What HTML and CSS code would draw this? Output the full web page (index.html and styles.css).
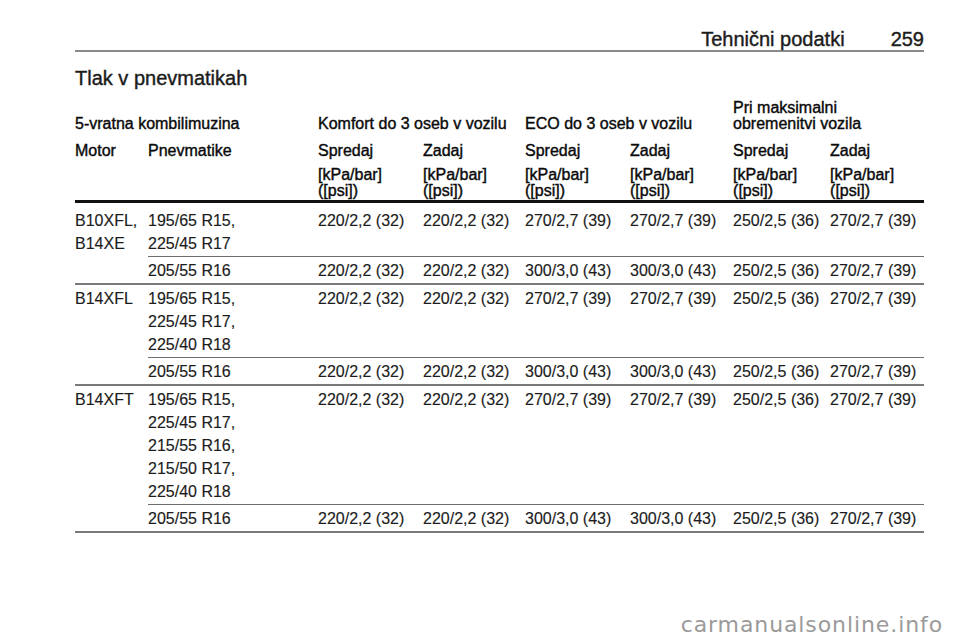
FILE: index.html
```html
<!DOCTYPE html>
<html lang="sl">
<head>
<meta charset="utf-8">
<title>Tehnični podatki 259</title>
<link rel="stylesheet" href="styles.css">
</head>
<body>
<div class="page">
  <header class="running-head">
    <span class="section">Tehnični podatki</span>
    <span class="pageno">259</span>
  </header>
  <h1 class="title">Tlak v pnevmatikah</h1>
  <table class="tyres">
    <colgroup>
      <col class="c-motor"><col class="c-tyre">
      <col class="c-v1"><col class="c-v2">
      <col class="c-v3"><col class="c-v4">
      <col class="c-v5"><col class="c-v6">
    </colgroup>
    <thead>
      <tr class="h1">
        <th colspan="2">5-vratna kombilimuzina</th>
        <th colspan="2">Komfort do 3 oseb v vozilu</th>
        <th colspan="2">ECO do 3 oseb v vozilu</th>
        <th colspan="2">Pri maksimalni<br>obremenitvi vozila</th>
      </tr>
      <tr class="h2">
        <th>Motor</th><th>Pnevmatike</th>
        <th>Spredaj</th><th>Zadaj</th>
        <th>Spredaj</th><th>Zadaj</th>
        <th>Spredaj</th><th>Zadaj</th>
      </tr>
      <tr class="h3">
        <th></th><th></th>
        <th>[kPa/bar]<br>([psi])</th><th>[kPa/bar]<br>([psi])</th>
        <th>[kPa/bar]<br>([psi])</th><th>[kPa/bar]<br>([psi])</th>
        <th>[kPa/bar]<br>([psi])</th><th>[kPa/bar]<br>([psi])</th>
      </tr>
    </thead>
    <tbody>
      <tr class="grp-top first">
        <td class="motor" rowspan="2">B10XFL,<br>B14XE</td>
        <td>195/65 R15,<br>225/45 R17</td>
        <td>220/2,2 (32)</td><td>220/2,2 (32)</td>
        <td>270/2,7 (39)</td><td>270/2,7 (39)</td>
        <td>250/2,5 (36)</td><td>270/2,7 (39)</td>
      </tr>
      <tr class="grp-end">
        <td>205/55 R16</td>
        <td>220/2,2 (32)</td><td>220/2,2 (32)</td>
        <td>300/3,0 (43)</td><td>300/3,0 (43)</td>
        <td>250/2,5 (36)</td><td>270/2,7 (39)</td>
      </tr>
      <tr class="grp-top">
        <td class="motor" rowspan="2">B14XFL</td>
        <td>195/65 R15,<br>225/45 R17,<br>225/40 R18</td>
        <td>220/2,2 (32)</td><td>220/2,2 (32)</td>
        <td>270/2,7 (39)</td><td>270/2,7 (39)</td>
        <td>250/2,5 (36)</td><td>270/2,7 (39)</td>
      </tr>
      <tr class="grp-end">
        <td>205/55 R16</td>
        <td>220/2,2 (32)</td><td>220/2,2 (32)</td>
        <td>300/3,0 (43)</td><td>300/3,0 (43)</td>
        <td>250/2,5 (36)</td><td>270/2,7 (39)</td>
      </tr>
      <tr class="grp-top">
        <td class="motor" rowspan="2">B14XFT</td>
        <td>195/65 R15,<br>225/45 R17,<br>215/55 R16,<br>215/50 R17,<br>225/40 R18</td>
        <td>220/2,2 (32)</td><td>220/2,2 (32)</td>
        <td>270/2,7 (39)</td><td>270/2,7 (39)</td>
        <td>250/2,5 (36)</td><td>270/2,7 (39)</td>
      </tr>
      <tr class="grp-end">
        <td>205/55 R16</td>
        <td>220/2,2 (32)</td><td>220/2,2 (32)</td>
        <td>300/3,0 (43)</td><td>300/3,0 (43)</td>
        <td>250/2,5 (36)</td><td>270/2,7 (39)</td>
      </tr>
    </tbody>
  </table>
</div>
<div class="watermark">carmanualsonline.info</div>
</body>
</html>
```
FILE: styles.css
```css
html, body {
  margin: 0;
  padding: 0;
  background: #ffffff;
}

body {
  font-family: "Liberation Sans", Arial, sans-serif;
  color: #1c1c1c;
  width: 960px;
  height: 642px;
  position: relative;
  overflow: hidden;
}

.page {
  padding: 0 36px 0 75px;
  width: 849px;
  -webkit-text-stroke: 0.15px currentColor;
}

.running-head {
  display: flex;
  justify-content: flex-end;
  gap: 46px;
  padding: 29px 0 1px;
  font-size: 20px;
  line-height: 20px;
  border-bottom: 2px solid #8a8a8a;
  -webkit-text-stroke: 0.4px currentColor;
}

.title {
  margin: 14px 0 0;
  font-size: 20px;
  line-height: 24px;
  font-weight: normal;
  -webkit-text-stroke: 0.4px currentColor;
}

.tyres {
  margin-top: 10px;
  width: 849px;
  table-layout: fixed;
  border-collapse: separate;
  border-spacing: 0;
  font-size: 16px;
}

.c-motor { width: 73px; }
.c-tyre  { width: 170px; }
.c-v1    { width: 105px; }
.c-v2    { width: 102px; }
.c-v3    { width: 105px; }
.c-v4    { width: 103px; }
.c-v5    { width: 97px; }
.c-v6    { width: 94px; }

.tyres th,
.tyres td {
  padding: 0;
  text-align: left;
  font-weight: normal;
  white-space: nowrap;
}

.tyres th {
  color: #0a0a0a;
  -webkit-text-stroke: 0.4px currentColor;
}

.h1 th {
  line-height: 16px;
  vertical-align: bottom;
}

.h2 th {
  padding-top: 7px;
  line-height: 23px;
}

.h3 th {
  padding: 5px 0 1px;
  line-height: 16px;
  vertical-align: bottom;
  border-bottom: 3px solid #111;
}

.tyres td {
  padding: 2px 0 1px;
  line-height: 23px;
  vertical-align: top;
}

.first td {
  padding-top: 6px;
}

.grp-top td {
  border-bottom: 1px solid #6e6e6e;
}

.grp-top td.motor,
.grp-end td {
  border-bottom: 2px solid #7a7a7a;
}

.watermark {
  position: absolute;
  right: 17px;
  top: 612px;
  font-family: "DejaVu Sans", sans-serif;
  font-size: 22px;
  line-height: 26px;
  letter-spacing: 0.9px;
  color: #9a9a9a;
}
```
